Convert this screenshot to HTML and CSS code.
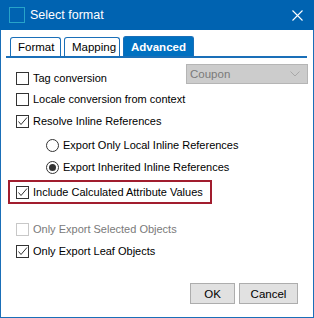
FILE: index.html
```
<!DOCTYPE html>
<html lang="en">
<head>
  <meta charset="UTF-8" />
  <title>Select format</title>
  <link rel="stylesheet" href="styles.css">
</head>
<body>
  <div class="window">
    <div class="titlebar">
      <span class="app-icon"></span>
      <span class="title">Select format</span>
      <svg class="close" width="11" height="11" viewBox="0 0 11 11">
        <path d="M0.5 0.5 L10.5 10.5 M10.5 0.5 L0.5 10.5" stroke="#fff" stroke-width="1.1" fill="none"/>
      </svg>
    </div>

    <div class="tabs">
      <div class="tab">Format</div>
      <div class="tab">Mapping</div>
      <div class="tab active">Advanced</div>
    </div>

    <div class="panel">
      <div class="row row-tag">
        <label class="opt"><span class="box"></span>Tag conversion</label>
        <div class="combo">
          <span>Coupon</span>
          <svg width="10" height="6" viewBox="0 0 10 6"><path d="M0.5 0.5 L5 5 L9.5 0.5" stroke="#a8a8a8" fill="none"/></svg>
        </div>
      </div>
      <div class="row row-locale">
        <label class="opt"><span class="box"></span>Locale conversion from context</label>
      </div>
      <div class="row row-resolve">
        <label class="opt"><span class="box checked"><svg width="11" height="11" viewBox="0 0 11 11"><path d="M1.5 5.5 L4 8.5 L10 1.5" stroke="#333" stroke-width="1" fill="none"/></svg></span>Resolve Inline References</label>
      </div>
      <div class="row sub row-local">
        <label class="opt"><span class="radio"></span>Export Only Local Inline References</label>
      </div>
      <div class="row sub row-inherited">
        <label class="opt"><span class="radio on"></span>Export Inherited Inline References</label>
      </div>
      <div class="row highlight">
        <label class="opt"><span class="box checked"><svg width="11" height="11" viewBox="0 0 11 11"><path d="M1.5 5.5 L4 8.5 L10 1.5" stroke="#333" stroke-width="1" fill="none"/></svg></span>Include Calculated Attribute Values</label>
      </div>
      <div class="row disabled row-selected">
        <label class="opt"><span class="box"></span>Only Export Selected Objects</label>
      </div>
      <div class="row row-leaf">
        <label class="opt"><span class="box checked"><svg width="11" height="11" viewBox="0 0 11 11"><path d="M1.5 5.5 L4 8.5 L10 1.5" stroke="#333" stroke-width="1" fill="none"/></svg></span>Only Export Leaf Objects</label>
      </div>
    </div>

    <div class="buttons">
      <button class="btn btn-ok">OK</button>
      <button class="btn btn-cancel">Cancel</button>
    </div>
  </div>
</body>
</html>
```

FILE: styles.css
```
* {
  box-sizing: border-box;
}

body {
  margin: 0;
  font-family: "Liberation Sans", Arial, sans-serif;
  font-size: 11px;
  color: #000;
  background-color: #fff;
}

.window {
  width: 314px;
  height: 318px;
  border: 1px solid #1a6fb8;
  border-top: none;
  display: flex;
  flex-direction: column;
}

.titlebar {
  height: 30px;
  margin: 0 -1px;
  background-color: #0063b1;
  display: flex;
  align-items: center;
  padding-left: 9px;
  color: #fff;
}

.app-icon {
  width: 16px;
  height: 16px;
  border: 1px solid #27a3c9;
  margin-right: 5px;
}

.title {
  font-size: 12.5px;
  flex: 1;
}

.close {
  margin-right: 11px;
}

/* pestañas */
.tabs {
  display: flex;
  gap: 3px;
  margin: 7px 6px 0 5px;
  padding-left: 4px;
  border-bottom: 2px solid #1a6fb8;
  height: 21px;
  align-items: flex-end;
}

.tab {
  height: 19px;
  padding: 0 7px;
  border: 1px solid #1a6fb8;
  border-bottom: none;
  border-radius: 3px 3px 0 0;
  display: flex;
  align-items: center;
  font-size: 11.5px;
}

.tab:nth-child(1) {
  width: 51px;
}

.tab:nth-child(2) {
  width: 56px;
}

.tab.active {
  width: 71px;
  height: 20px;
  background-color: #0070c0;
  color: #fff;
  font-weight: bold;
}

.panel {
  flex: 1;
  display: flex;
  flex-direction: column;
  padding-top: 9px;
}

.row {
  height: 22px;
  display: flex;
  align-items: center;
  justify-content: space-between;
  padding-left: 15px;
}

.row-locale {
  margin-top: -1px;
}

.row-local {
  margin-top: 2px;
}

.row.sub {
  padding-left: 45px;
}

.opt {
  display: flex;
  align-items: center;
  white-space: nowrap;
}

.box {
  width: 13px;
  height: 13px;
  border: 1px solid #333;
  background-color: #fff;
  margin-right: 4px;
  display: flex;
  align-items: center;
  justify-content: center;
}

.radio {
  width: 13px;
  height: 13px;
  border: 1px solid #333;
  border-radius: 50%;
  margin-right: 4px;
  display: flex;
  align-items: center;
  justify-content: center;
}

.radio.on::after {
  content: "";
  width: 7px;
  height: 7px;
  border-radius: 50%;
  background-color: #333;
}

.combo {
  align-self: flex-start;
  margin-top: -3px;
  margin-right: 5px;
  width: 122px;
  height: 20px;
  background-color: #cccccc;
  border: 1px solid #b5b5b5;
  color: #7a7a7a;
  display: flex;
  align-items: center;
  justify-content: space-between;
  padding: 0 7px 0 3px;
  font-size: 11.5px;
}

.highlight {
  margin-top: 2px;
  height: 24px;
  width: 204px;
  margin-left: 7px;
  padding-left: 6px;
  border: 2px solid #a11d2e;
}

.disabled {
  color: #7a7a7a;
}

.disabled .box {
  border-color: #c8c8c8;
}

.row-selected {
  margin-top: 14px;
}

/* botones */
.buttons {
  display: flex;
  justify-content: flex-end;
  gap: 4px;
  padding: 0 15px 13px 0;
}

.btn {
  height: 21px;
  background-color: #e1e1e1;
  border: 1px solid #adadad;
  font-family: inherit;
  font-size: 11.5px;
  padding: 0;
}

.btn-ok {
  width: 45px;
}

.btn-cancel {
  width: 59px;
}
```
